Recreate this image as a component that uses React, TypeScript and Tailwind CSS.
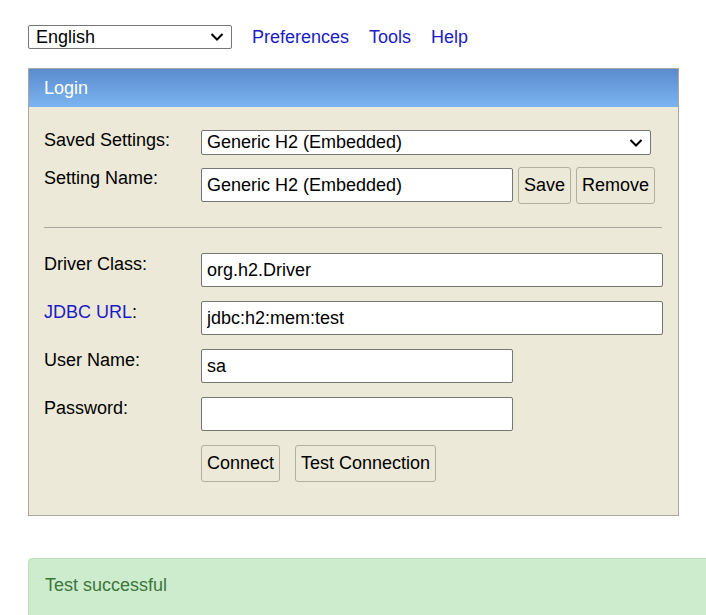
import React from 'react';

const font = { fontFamily: '"Liberation Sans", Arial, sans-serif' };

const Chevron: React.FC = () => (
  <svg width="14" height="9" viewBox="0 0 14 9" className="pointer-events-none absolute right-[8px] top-1/2 -translate-y-1/2">
    <path d="M1.5 1.5 L7 7 L12.5 1.5" fill="none" stroke="#000" strokeWidth="2" />
  </svg>
);

const Field: React.FC<{ label: React.ReactNode; children: React.ReactNode }> = ({ label, children }) => (
  <div className="flex items-start">
    <div className="w-[157px] shrink-0 pt-[1px] leading-[21px]">{label}</div>
    {children}
  </div>
);

const inputCls =
  'h-[34px] border border-[#767676] rounded-[2px] bg-white px-[5px] text-[18px] text-black outline-none';

const btnCls =
  'h-[37px] border border-[#b3af9f] rounded-[3px] bg-[#ece9d8] px-[5px] text-[18px] text-black';

export default function App() {
  return (
    <div className="w-[706px] h-[615px] overflow-hidden bg-white text-[18px] text-black" style={font}>
      <div className="pl-[28px] pt-[25px]">
        <div className="flex items-center gap-5 h-[24px] leading-[24px]">
          <div className="relative">
            <select
              className="appearance-none w-[204px] h-[24px] border border-[#767676] rounded-[2px] bg-white pl-[7px] text-[18px] leading-[20px] outline-none"
              defaultValue="en"
            >
              <option value="en">English</option>
            </select>
            <Chevron />
          </div>
          <a href="#" className="text-[#1c1cc4]">Preferences</a>
          <a href="#" className="text-[#1c1cc4]">Tools</a>
          <a href="#" className="text-[#1c1cc4]">Help</a>
        </div>

        <div className="mt-[19px] w-[651px] border border-[#a9a89f] bg-[#ece9d8]">
          <div className="h-[38px] bg-gradient-to-b from-[#5b8bce] to-[#7bb5f1] px-[15px] flex items-center text-white">
            Login
          </div>
          <div className="px-[15px] pt-[22px] pb-[33px]">
            <Field label="Saved Settings:">
              <div className="relative">
                <select
                  className="appearance-none w-[450px] h-[25px] border border-[#767676] rounded-[2px] bg-white pl-[5px] text-[18px] leading-[20px] outline-none"
                  defaultValue="h2"
                >
                  <option value="h2">Generic H2 (Embedded)</option>
                </select>
                <Chevron />
              </div>
            </Field>

            <div className="mt-[11px]">
              <Field label="Setting Name:">
                <div className="flex items-start gap-[5px]">
                  <input className={`${inputCls} w-[312px] mt-[1px]`} defaultValue="Generic H2 (Embedded)" />
                  <button className={btnCls}>Save</button>
                  <button className={btnCls}>Remove</button>
                </div>
              </Field>
            </div>

            <div className="mt-[23px] h-px bg-[#a8a79f] w-[618px]" />

            <div className="mt-[25px] flex flex-col gap-[14px]">
              <Field label="Driver Class:">
                <input className={`${inputCls} w-[462px]`} defaultValue="org.h2.Driver" />
              </Field>
              <Field
                label={
                  <span>
                    <a href="#" className="text-[#1c1cc4]">JDBC URL</a>:
                  </span>
                }
              >
                <input className={`${inputCls} w-[462px]`} defaultValue="jdbc:h2:mem:test" />
              </Field>
              <Field label="User Name:">
                <input className={`${inputCls} w-[312px]`} defaultValue="sa" />
              </Field>
              <Field label="Password:">
                <input type="password" className={`${inputCls} w-[312px]`} defaultValue="" />
              </Field>
            </div>

            <div className="mt-[14px] pl-[157px] flex gap-[15px]">
              <button className={btnCls}>Connect</button>
              <button className={btnCls}>Test Connection</button>
            </div>
          </div>
        </div>

        <div className="mt-[42px] w-[700px] h-[80px] rounded-[4px] border border-[#bfdcbf] bg-[#cdeccd] px-[16px] pt-[13px] text-[#3c763d]">
          Test successful
        </div>
      </div>
    </div>
  );
}
